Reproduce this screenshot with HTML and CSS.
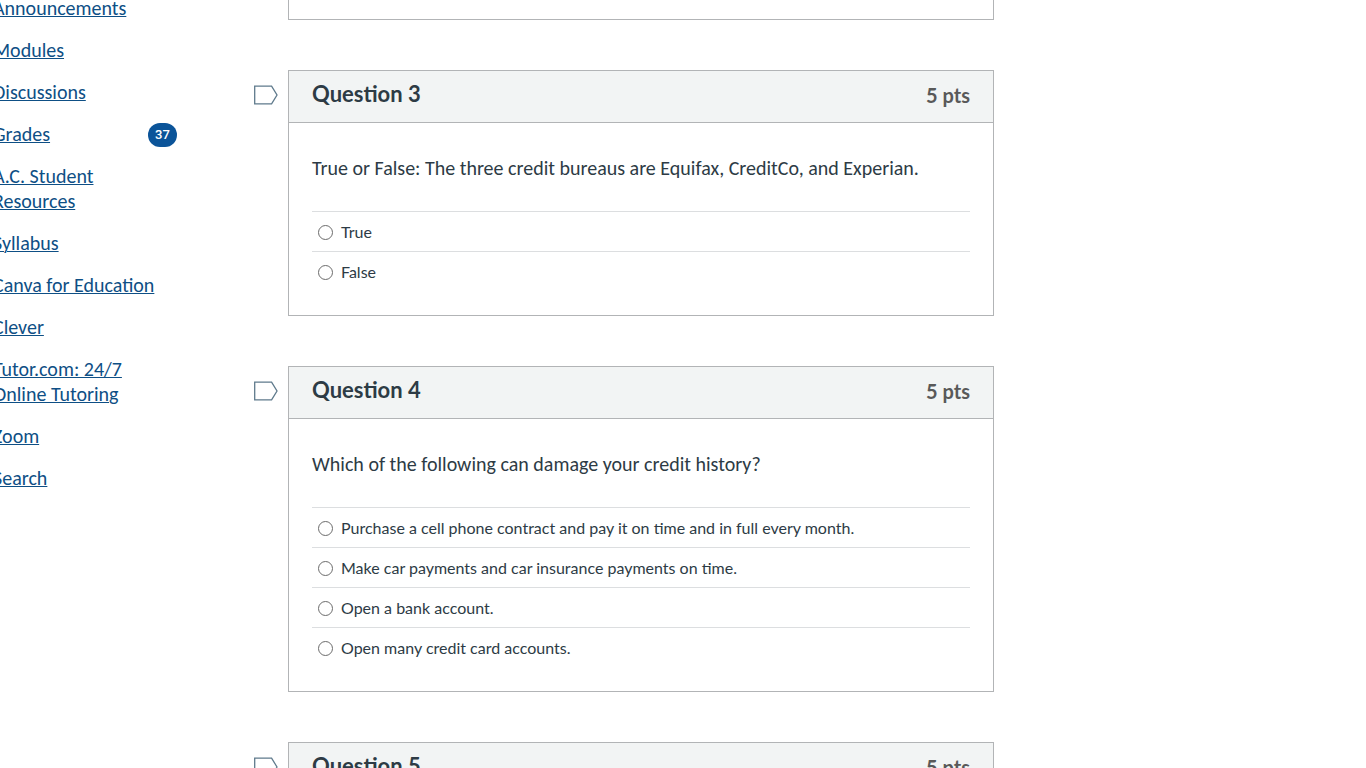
FILE: index.html
```html
<!DOCTYPE html>
<html lang="en">
<head>
    <meta charset="UTF-8">
    <meta name="viewport" content="width=device-width, initial-scale=1.0">
    <title>Quiz</title>
    <link rel="stylesheet" href="styles.css">
</head>
<body>
    <div class="layout">
        <nav class="course-nav" aria-label="Courses Navigation Menu">
            <ul>
                <li><a href="#">Announcements</a></li>
                <li><a href="#">Modules</a></li>
                <li><a href="#">Discussions</a></li>
                <li><a href="#">Grades</a><span class="badge">37</span></li>
                <li><a href="#">A.C. Student<br>Resources</a></li>
                <li><a href="#">Syllabus</a></li>
                <li><a href="#">Canva for Education</a></li>
                <li><a href="#">Clever</a></li>
                <li><a href="#">Tutor.com: 24/7<br>Online Tutoring</a></li>
                <li><a href="#">Zoom</a></li>
                <li><a href="#">Search</a></li>
            </ul>
        </nav>
        <main class="quiz">
            <div class="question-row">
                <div class="question question-end"></div>
            </div>

            <div class="question-row">
                <button type="button" class="flag" aria-label="Flag question 3">
                    <svg width="24" height="20" viewBox="0 0 24 20"><path d="M.7 1.2H17.6L23 10l-5.400 8.800H.7z"/></svg>
                </button>
                <section class="question">
                    <div class="question-header">
                        <h2>Question 3</h2>
                        <span class="points">5 pts</span>
                    </div>
                    <div class="question-body">
                        <p id="q3">True or False: The three credit bureaus are Equifax, CreditCo, and Experian.</p>
                        <div class="answers" role="radiogroup" aria-labelledby="q3">
                            <label class="answer"><input type="radio" name="q3">True</label>
                            <label class="answer"><input type="radio" name="q3">False</label>
                        </div>
                    </div>
                </section>
            </div>

            <div class="question-row">
                <button type="button" class="flag" aria-label="Flag question 4">
                    <svg width="24" height="20" viewBox="0 0 24 20"><path d="M.7 1.2H17.6L23 10l-5.400 8.800H.7z"/></svg>
                </button>
                <section class="question">
                    <div class="question-header">
                        <h2>Question 4</h2>
                        <span class="points">5 pts</span>
                    </div>
                    <div class="question-body">
                        <p id="q4">Which of the following can damage your credit history?</p>
                        <div class="answers" role="radiogroup" aria-labelledby="q4">
                            <label class="answer"><input type="radio" name="q4">Purchase a cell phone contract and pay it on time and in full every month.</label>
                            <label class="answer"><input type="radio" name="q4">Make car payments and car insurance payments on time.</label>
                            <label class="answer"><input type="radio" name="q4">Open a bank account.</label>
                            <label class="answer"><input type="radio" name="q4">Open many credit card accounts.</label>
                        </div>
                    </div>
                </section>
            </div>

            <div class="question-row">
                <button type="button" class="flag" aria-label="Flag question 5">
                    <svg width="24" height="20" viewBox="0 0 24 20"><path d="M.7 1.2H17.6L23 10l-5.400 8.800H.7z"/></svg>
                </button>
                <section class="question">
                    <div class="question-header">
                        <h2>Question 5</h2>
                        <span class="points">5 pts</span>
                    </div>
                </section>
            </div>
        </main>
    </div>
</body>
</html>
```
FILE: styles.css
```css
* {
    box-sizing: border-box;
}

body {
    margin: 0;
    height: 100vh;
    overflow: hidden;
    background-color: #fff;
    color: #2d3b45;
    font-family: Lato, sans-serif;
}

.layout {
    display: flex;
    padding-right: 372px;
}

/* Course navigation */
.course-nav {
    flex: 0 0 184px;
    margin: -4px 77px 0 -7px;
}

.course-nav ul {
    list-style: none;
    margin: 0;
    padding: 0;
}

.course-nav li {
    display: flex;
    align-items: center;
    justify-content: space-between;
    margin-bottom: 17px;
    font-family: Carlito, Lato, sans-serif;
    font-size: 20px;
    line-height: 25px;
}

.course-nav a {
    color: #0e4f85;
    text-decoration: underline;
    text-decoration-thickness: 1px;
}

.badge {
    min-width: 29px;
    border-radius: 12px;
    background-color: #0b5499;
    color: #fff;
    font-family: Roboto, sans-serif;
    font-size: 13px;
    font-weight: 500;
    line-height: 24px;
    text-align: center;
}

/* Questions */
.quiz {
    flex: 1;
    min-width: 0;
}

.question-row {
    display: flex;
    justify-content: flex-end;
    align-items: flex-start;
    margin-bottom: 50px;
}

.flag {
    flex: none;
    margin: 15px 10px 0 0;
    padding: 0;
    border: none;
    background: none;
    cursor: pointer;
}

.flag svg {
    display: block;
    fill: #fff;
    stroke: #5f7a8c;
    stroke-width: 1.3;
}

.question {
    flex: 1;
    border: 1px solid #b2b4b6;
}

.question-end {
    height: 20px;
    margin-left: 34px;
    border-top: none;
}

.question-header {
    display: flex;
    align-items: flex-start;
    justify-content: space-between;
    padding: 10px 23px 13px;
    border-bottom: 1px solid #b2b4b6;
    background-color: #f2f4f4;
}

.question-header h2 {
    margin: 0;
    font-size: 22px;
    line-height: 26px;
}

.points {
    color: #595959;
    font-size: 20px;
    font-weight: 700;
    line-height: 28px;
}

.question-body {
    padding: 33px 23px 24px;
}

.question-body p {
    margin: 0 0 31px;
    font-family: Carlito, Lato, sans-serif;
    font-size: 20px;
    line-height: 24px;
}

.answer {
    display: flex;
    align-items: center;
    gap: 8px;
    height: 40px;
    padding-left: 6px;
    border-top: 1px solid #dcdee0;
    font-size: 16px;
    line-height: 20px;
}

.answer input {
    appearance: none;
    width: 15px;
    height: 15px;
    margin: 2px 0 0;
    border: 1px solid #6b6b6b;
    border-radius: 50%;
    background-color: #fff;
}

.answer input:checked {
    border: 4px solid #0b5499;
}
```
